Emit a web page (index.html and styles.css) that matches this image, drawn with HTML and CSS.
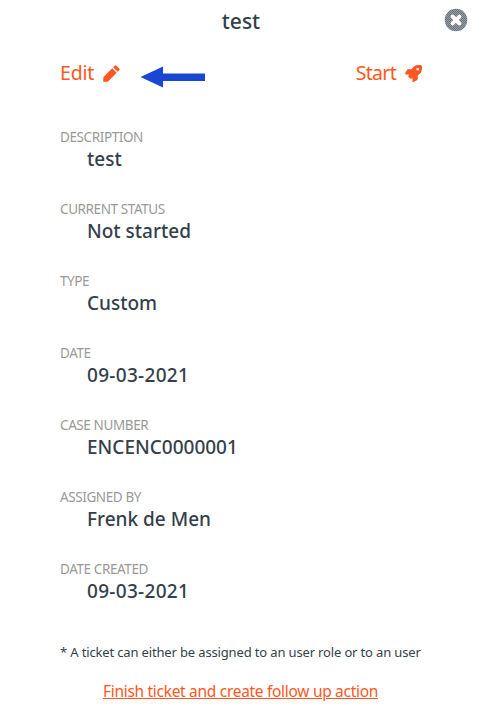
FILE: index.html
```
<!DOCTYPE html>
<html lang="en">
<head>
    <meta charset="UTF-8">
    <meta name="viewport" content="width=device-width, initial-scale=1.0">
    <title>Ticket</title>
    <link rel="stylesheet" href="styles.css">
</head>
<body>
<div class="ticket">
    <header class="ticket-header">
        <h1 class="ticket-title">test</h1>
        <button class="close-button" aria-label="Close">
            <svg viewBox="0 0 24 24" width="24" height="24">
                <defs>
                    <pattern id="dots" width="2" height="2" patternUnits="userSpaceOnUse">
                        <rect width="2" height="2" fill="#9b9fa3"/>
                        <rect width="1" height="1" fill="#65717c"/>
                        <rect x="1" y="1" width="1" height="1" fill="#65717c"/>
                    </pattern>
                </defs>
                <circle cx="12" cy="12" r="11.3" fill="url(#dots)"/>
                <path d="M8.6 8.6l6.8 6.8M15.4 8.6l-6.8 6.8" stroke="#fff" stroke-width="4" stroke-linecap="round"/>
            </svg>
        </button>
    </header>

    <div class="actions">
        <a class="action edit">
            <span>Edit</span>
            <svg viewBox="0 0 17 17" width="17" height="17">
                <path d="M0.3 12.2L9.2 3.3l4.5 4.5L4.8 16.7H0.3zM10.2 2.3l1.5-1.5q.9-.9 1.8 0l2.7 2.7q.9.9 0 1.8l-1.5 1.5z"/>
            </svg>
        </a>
        <svg class="arrow" viewBox="0 0 66 22" width="66" height="22">
            <path d="M0.5 11L23 0.5V7.5H65V15H23V21.5z"/>
        </svg>
        <a class="action start">
            <span>Start</span>
            <svg viewBox="0 0 512 512" width="17" height="17">
                <path d="M505.12 19.09c-1.19-5.53-6.66-11-12.21-12.18C460.61 0 435.46 0 410.36 0c-103.2 0-165.1 55.21-211.29 128H94.87c-16.35 0-35.56 11.88-42.87 26.48L2.58 253.29A28.4 28.4 0 0 0 0 264a24 24 0 0 0 24 24h103.81l-22.47 22.47a32 32 0 0 0 0 45.25l50.9 50.91a32 32 0 0 0 45.26 0L224 384.16V488a24 24 0 0 0 24 24 28.5 28.5 0 0 0 10.7-2.58l98.72-49.39c14.63-7.29 26.5-26.5 26.5-42.86V312.79c72.59-46.3 128-108.4 128-211.09.1-25.2.1-50.4-6.8-82.61zM384 168a40 40 0 1 1 40-40 40 40 0 0 1-40 40z"/>
            </svg>
        </a>
    </div>

    <dl class="details">
        <div class="detail">
            <dt>DESCRIPTION</dt>
            <dd>test</dd>
        </div>
        <div class="detail">
            <dt>CURRENT STATUS</dt>
            <dd>Not started</dd>
        </div>
        <div class="detail">
            <dt>TYPE</dt>
            <dd>Custom</dd>
        </div>
        <div class="detail">
            <dt>DATE</dt>
            <dd class="date">09-03-2021</dd>
        </div>
        <div class="detail">
            <dt>CASE NUMBER</dt>
            <dd>ENCENC0000001</dd>
        </div>
        <div class="detail">
            <dt>ASSIGNED BY</dt>
            <dd>Frenk de Men</dd>
        </div>
        <div class="detail">
            <dt>DATE CREATED</dt>
            <dd class="date">09-03-2021</dd>
        </div>
    </dl>

    <p class="note">* A ticket can either be assigned to an user role or to an user</p>
    <a class="finish" href="#">Finish ticket and create follow up action</a>
</div>
</body>
</html>
```

FILE: styles.css
```
* { margin: 0; padding: 0; box-sizing: border-box; }
body {
    font-family: "Segoe UI", "Noto Sans", "Open Sans", sans-serif;
    background: #fff;
    color: #343f4b;
}
.ticket {
    height: 725px;
    padding: 0 60px;
    display: flex;
    flex-direction: column;
}
.ticket-header {
    display: flex;
    justify-content: flex-end;
    height: 42px;
    margin-right: -43px;
}
.ticket-title {
    flex: 1;
    margin-left: -22px;
    text-align: center;
    font-size: 21px;
    line-height: 42px;
    font-weight: 500;
}
.close-button {
    align-self: flex-start;
    width: 24px;
    height: 24px;
    margin-top: 8px;
    border: none;
    background: none;
}
.close-button svg { display: block; }
.actions {
    display: flex;
    align-items: center;
    height: 62px;
}
.action {
    display: flex;
    align-items: center;
    gap: 9px;
    color: #ff5722;
    font-size: 19.5px;
    line-height: 28px;
    letter-spacing: -0.2px;
}
.action svg { fill: currentColor; }
.arrow { margin: 8px 0 0 20px; fill: #1947d1; }
.start {
    margin: 0 3px 0 auto;
    letter-spacing: -0.7px;
}
.details { margin-top: 24px; }
.detail { height: 72px; }
.detail dt {
    font-size: 13.5px;
    line-height: 18px;
    letter-spacing: -0.4px;
    color: #999;
}
.detail dd {
    margin-left: 27px;
    font-size: 19px;
    line-height: 26px;
    font-weight: 500;
}
.detail .date { letter-spacing: 0.3px; }
.note {
    margin-top: 10px;
    font-size: 13px;
    line-height: 20px;
    letter-spacing: -0.15px;
    white-space: nowrap;
}
.finish {
    align-self: center;
    margin: 17px 4px 0 0;
    color: #ff5722;
    font-size: 15.5px;
    line-height: 24px;
    letter-spacing: -0.3px;
    white-space: nowrap;
}
```
